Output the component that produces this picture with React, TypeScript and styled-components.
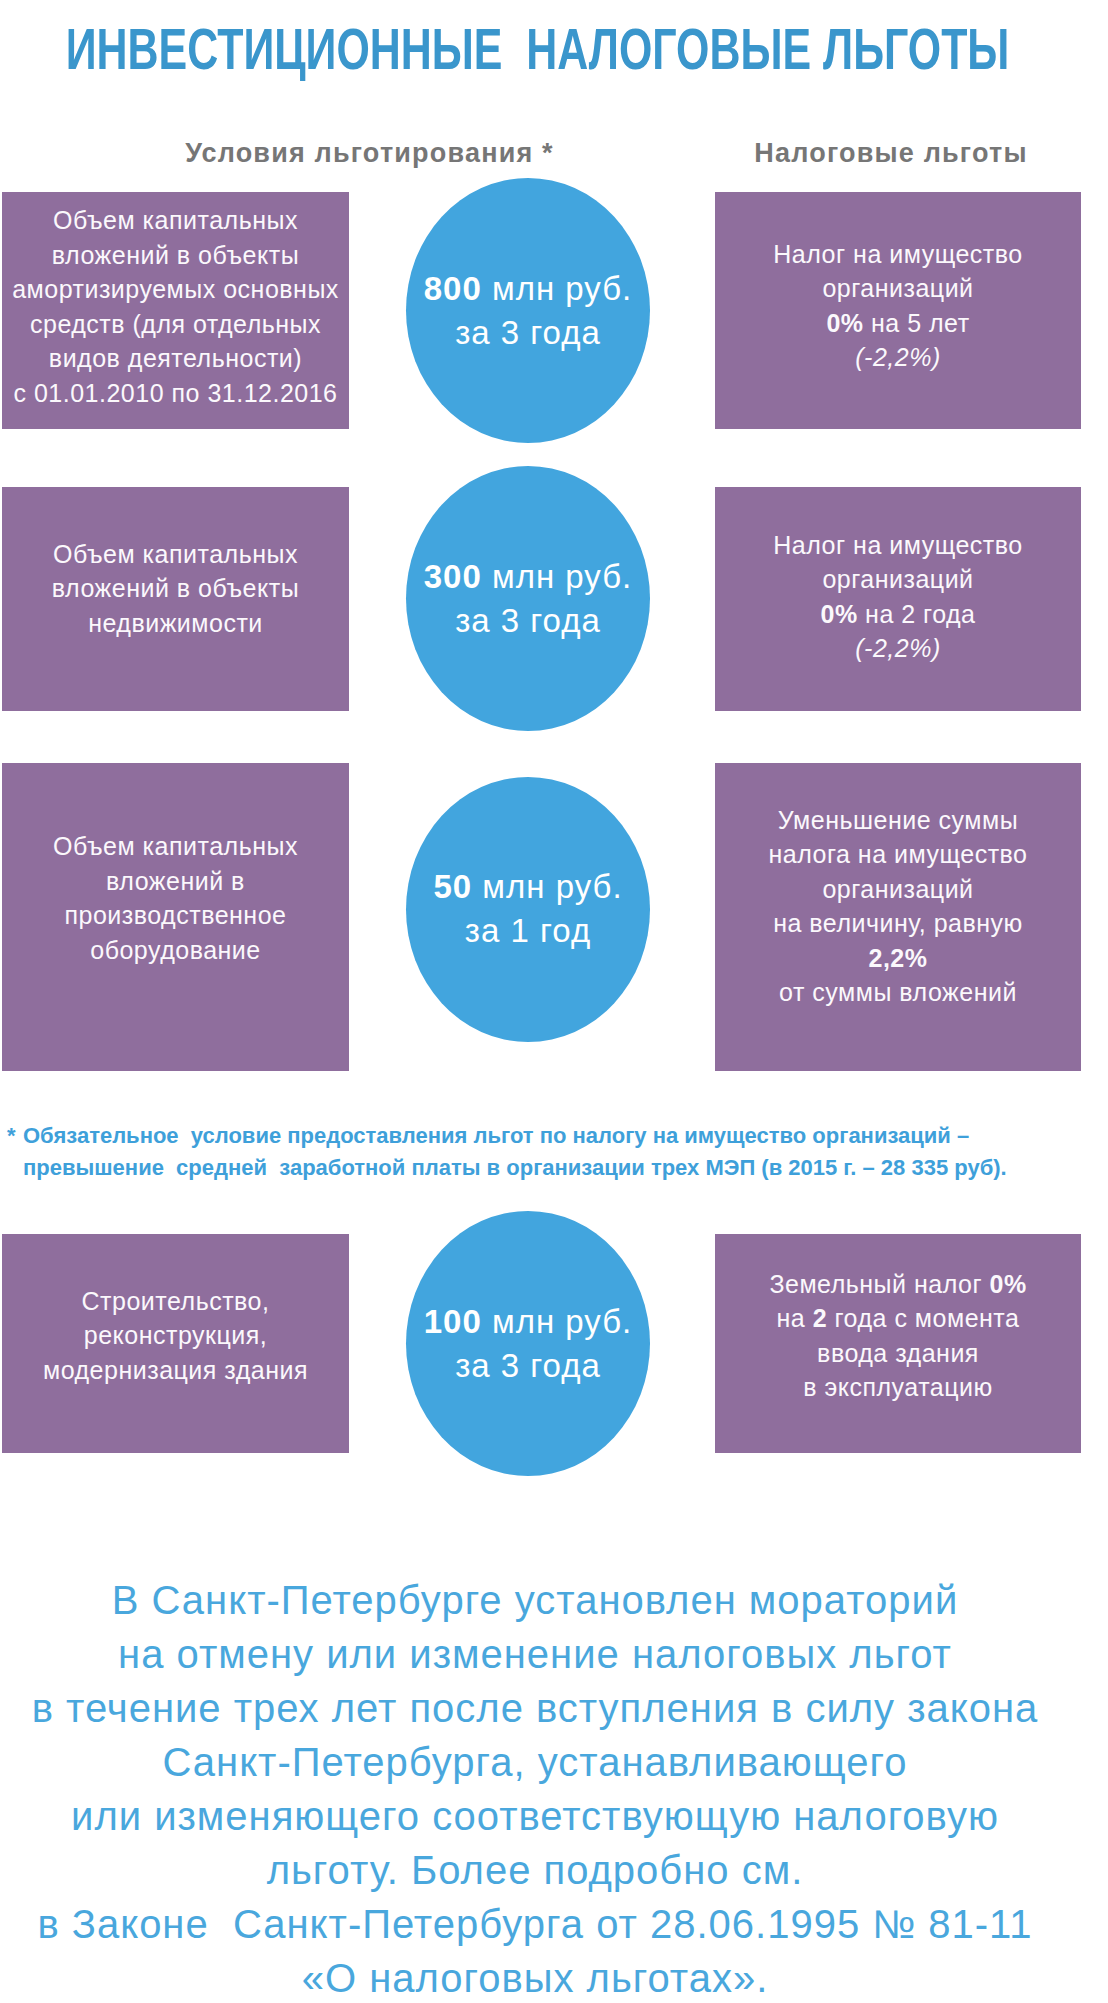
import React from "react"
import styled, { createGlobalStyle } from "styled-components"

const GlobalStyle = createGlobalStyle`
    html, body {
        margin: 0;
        padding: 0;
        background: #fff;
    }
`

const colors = {
    title: "#3a96cc",
    head: "#767676",
    box: "#8f6e9d",
    circle: "#42a5de",
    note: "#3ea0da",
    text: "#49a7dd",
}

const Page = styled.div`
    width: 1108px;
    min-height: 2003px;
    padding-top: 17px;
    box-sizing: border-box;
    overflow: hidden;
    font-family: "Liberation Sans", Arial, sans-serif;
`

const Title = styled.h1`
    margin: 0;
    padding-right: 32px;
    display: flex;
    justify-content: center;
    font-size: 58px;
    line-height: 64px;
    font-weight: 700;
    color: ${colors.title};
    white-space: pre;
`

const TitleText = styled.span`
    display: inline-block;
    flex-shrink: 0;
    transform: scaleX(0.74);
`

const HeadRow = styled.div`
    display: grid;
    grid-template-columns: 739px 304px;
    margin-top: 56px;
`

const ColumnHead = styled.div`
    text-align: center;
    font-size: 27px;
    line-height: 32px;
    font-weight: 700;
    letter-spacing: 1.2px;
    color: ${colors.head};
    white-space: nowrap;
`

const Row = styled.div<{ $gap: number }>`
    display: flex;
    align-items: center;
    padding-left: 2px;
    margin-top: ${p => p.$gap}px;
`

const InfoBox = styled.div<{ $w: number; $h: number; $shift: number; $left?: number }>`
    width: ${p => p.$w}px;
    height: ${p => p.$h}px;
    margin-left: ${p => p.$left ?? 0}px;
    flex-shrink: 0;
    box-sizing: border-box;
    padding: ${p => (p.$shift > 0 ? `0 0 ${p.$shift * 2}px` : `${-p.$shift * 2}px 0 0`)};
    background: ${colors.box};
    color: #fbf8fc;
    display: flex;
    flex-direction: column;
    justify-content: center;
    align-items: center;
    text-align: center;
    font-size: 25px;
    line-height: 34.5px;
    letter-spacing: 0.5px;
    white-space: nowrap;

    b {
        font-weight: 700;
    }
`

const Circle = styled.div<{ $raise: number }>`
    width: 244px;
    height: 265px;
    margin-left: 57px;
    margin-bottom: ${p => p.$raise * 2}px;
    flex-shrink: 0;
    border-radius: 50%;
    background: ${colors.circle};
    color: #fff;
    display: flex;
    flex-direction: column;
    justify-content: center;
    align-items: center;
    text-align: center;
    font-size: 33px;
    line-height: 44px;
    letter-spacing: 1px;
    white-space: nowrap;
`

const Footnote = styled.div`
    display: flex;
    margin-top: 49px;
    padding-left: 7px;
    color: ${colors.note};
    font-size: 22px;
    line-height: 32px;
    font-weight: 700;
    white-space: pre;
`

const Star = styled.span`
    width: 16px;
    flex-shrink: 0;
`

const Paragraph = styled.p`
    margin: 97px 0 0;
    padding-right: 38px;
    text-align: center;
    color: ${colors.text};
    font-size: 40px;
    line-height: 54px;
    letter-spacing: 1px;
    white-space: pre;
`

type Item = {
    gap: number
    height: number
    left: React.ReactNode
    leftShift: number
    amount: string
    term: string
    raise: number
    right: React.ReactNode
    rightShift: number
}

const items: Item[] = [
    {
        gap: 9,
        height: 237,
        left: (
            <>
                Объем капитальных<br />вложений в объекты<br />амортизируемых основных<br />
                средств (для отдельных<br />видов деятельности)<br />с 01.01.2010 по 31.12.2016
            </>
        ),
        leftShift: 4,
        amount: "800",
        term: "за 3 года",
        raise: 0,
        right: (
            <>
                Налог на имущество<br />организаций<br /><span><b>0%</b> на 5 лет</span><i>(-2,2%)</i>
            </>
        ),
        rightShift: 5,
    },
    {
        gap: 23,
        height: 224,
        left: (
            <>
                Объем капитальных<br />вложений в объекты<br />недвижимости
            </>
        ),
        leftShift: 10,
        amount: "300",
        term: "за 3 года",
        raise: 0,
        right: (
            <>
                Налог на имущество<br />организаций<br /><span><b>0%</b> на 2 года</span><i>(-2,2%)</i>
            </>
        ),
        rightShift: 2,
    },
    {
        gap: 32,
        height: 308,
        left: (
            <>
                Объем капитальных<br />вложений в<br />производственное<br />оборудование
            </>
        ),
        leftShift: 19,
        amount: "50",
        term: "за 1 год",
        raise: 8,
        right: (
            <>
                Уменьшение суммы<br />налога на имущество<br />организаций<br />на величину, равную<br />
                <b>2,2%</b>от суммы вложений
            </>
        ),
        rightShift: 11,
    },
]

const lastItem: Item = {
    gap: 27,
    height: 219,
    left: (
        <>
            Строительство,<br />реконструкция,<br />модернизация здания
        </>
    ),
    leftShift: 8,
    amount: "100",
    term: "за 3 года",
    raise: 0,
    right: (
        <>
            <span>Земельный налог <b>0%</b></span>
            <span>на <b>2</b> года с момента</span>
            ввода здания<br />в эксплуатацию
        </>
    ),
    rightShift: 8,
}

const BenefitRow = ({ item }: { item: Item }) => (
    <Row $gap={item.gap}>
        <InfoBox $w={347} $h={item.height} $shift={item.leftShift}>
            <div>{item.left}</div>
        </InfoBox>
        <Circle $raise={item.raise}>
            <div>
                <b>{item.amount}</b> млн руб.
            </div>
            <div>{item.term}</div>
        </Circle>
        <InfoBox $w={366} $h={item.height} $shift={item.rightShift} $left={65}>
            {item.right}
        </InfoBox>
    </Row>
)

const App = () => {
    return (
        <Page>
            <GlobalStyle />
            <Title>
                <TitleText>{"ИНВЕСТИЦИОННЫЕ  НАЛОГОВЫЕ ЛЬГОТЫ"}</TitleText>
            </Title>
            <HeadRow>
                <ColumnHead>Условия льготирования *</ColumnHead>
                <ColumnHead>Налоговые льготы</ColumnHead>
            </HeadRow>
            {items.map((item, i) => (
                <BenefitRow key={i} item={item} />
            ))}
            <Footnote>
                <Star>*</Star>
                <div>
                    {"Обязательное  условие предоставления льгот по налогу на имущество организаций –\n" +
                        "превышение  средней  заработной платы в организации трех МЭП (в 2015 г. – 28 335 руб)."}
                </div>
            </Footnote>
            <BenefitRow item={lastItem} />
            <Paragraph>
                {"В Санкт-Петербурге установлен мораторий\n" +
                    "на отмену или изменение налоговых льгот\n" +
                    "в течение трех лет после вступления в силу закона\n" +
                    "Санкт-Петербурга, устанавливающего\n" +
                    "или изменяющего соответствующую налоговую\n" +
                    "льготу. Более подробно см.\n" +
                    "в Законе  Санкт-Петербурга от 28.06.1995 № 81-11\n" +
                    "«О налоговых льготах»."}
            </Paragraph>
        </Page>
    )
}

export default App
